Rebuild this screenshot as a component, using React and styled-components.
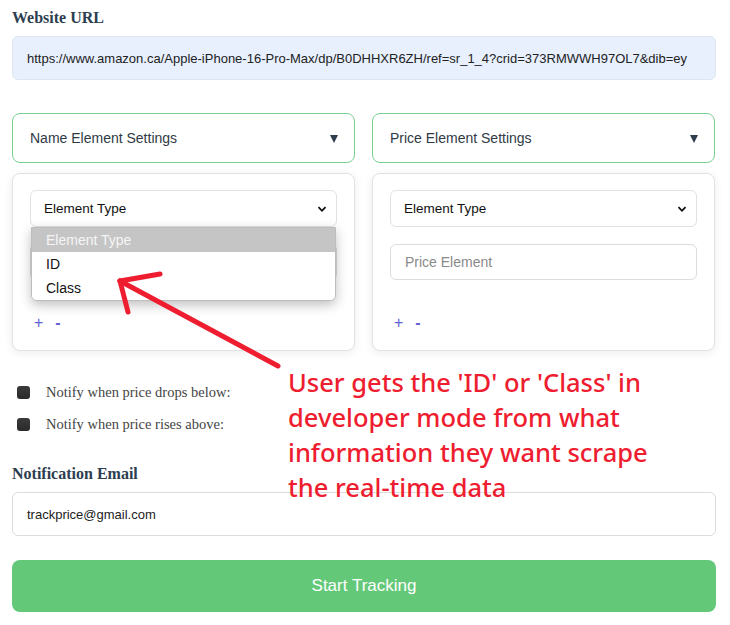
import React from "react";
import styled, { createGlobalStyle } from "styled-components";

const Global = createGlobalStyle`
  html, body { margin: 0; padding: 0; background: #ffffff; }
  body { font-family: "Liberation Sans", Arial, sans-serif; }
  * { box-sizing: border-box; }
`;

const Page = styled.div`
  position: relative;
  width: 730px;
  height: 625px;
  padding: 8px 14px 0 12px;
  overflow: hidden;
`;

const Label = styled.div`
  font-family: "Liberation Serif", "Times New Roman", serif;
  font-weight: bold;
  font-size: 16px;
  line-height: 20px;
  color: #2c3e50;
  margin-bottom: 8px;
`;

const TextInput = styled.input`
  display: block;
  width: 100%;
  height: ${(p) => p.$h || 44}px;
  padding: 0 14px;
  font-family: "Liberation Sans", Arial, sans-serif;
  font-size: ${(p) => p.$fs || 13}px;
  color: #222;
  background: ${(p) => (p.$filled ? "#e8f0fe" : "#ffffff")};
  border: 1px solid ${(p) => (p.$filled ? "#dfe5ee" : "#dcdcdc")};
  border-radius: 6px;
  outline: none;
  &::placeholder { color: #8a8a8a; }
`;

const Columns = styled.div`
  display: grid;
  grid-template-columns: 343px 343px;
  column-gap: 17px;
  margin-top: 33px;
`;

const Column = styled.div`
  display: flex;
  flex-direction: column;
  gap: 10px;
`;

const Header = styled.div`
  height: 50px;
  display: flex;
  align-items: center;
  justify-content: space-between;
  padding: 0 16px 0 17px;
  border: 1.5px solid #7ccf8f;
  border-radius: 8px;
  font-size: 14px;
  color: #2f3a45;
  background: #fff;
`;

const Triangle = styled.span`
  width: 0;
  height: 0;
  border-left: 4.5px solid transparent;
  border-right: 4.5px solid transparent;
  border-top: 8px solid #2c3e50;
  margin-top: 2px;
`;

const Panel = styled.div`
  position: relative;
  height: 178px;
  padding: 16px 17px 0 17px;
  border: 1px solid #e2e2e2;
  border-radius: 8px;
  background: #fff;
  box-shadow: 0 2px 10px rgba(0, 0, 0, 0.08);
  display: flex;
  flex-direction: column;
`;

const SelectBox = styled.div`
  position: relative;
  height: 37px;
  display: flex;
  align-items: center;
  justify-content: space-between;
  padding: 0 8px 0 13px;
  border: 1px solid #e2e2e2;
  border-radius: 6px;
  font-size: 13.5px;
  color: #111;
  background: #fff;
`;

const FieldGap = styled.div`
  height: 17px;
`;

const Controls = styled.div`
  display: flex;
  gap: 12px;
  margin-top: 34px;
  padding-left: 4px;
  font-size: 16px;
  line-height: 18px;
  color: #6464d8;
`;

const Ctl = styled.span`
  font-weight: ${(p) => (p.$minus ? "bold" : "normal")};
`;

const Dropdown = styled.div`
  position: absolute;
  left: 0;
  right: 0;
  top: 36px;
  background: #fff;
  border: 1px solid #bdbdbd;
  border-radius: 0 0 6px 6px;
  box-shadow: 0 4px 12px rgba(0, 0, 0, 0.25);
  overflow: hidden;
  z-index: 2;
`;

const Option = styled.div`
  height: 24px;
  line-height: 24px;
  padding-left: 14px;
  font-size: 14px;
  color: ${(p) => (p.$active ? "#f5f5f5" : "#111")};
  background: ${(p) => (p.$active ? "#c5c5c5" : "#fff")};
`;

const Checks = styled.div`
  display: flex;
  flex-direction: column;
  gap: 13px;
  margin-top: 32px;
  padding-left: 5px;
`;

const CheckRow = styled.label`
  display: flex;
  align-items: center;
  gap: 16px;
  font-family: "Liberation Serif", "Times New Roman", serif;
  font-size: 14.5px;
  line-height: 19px;
  color: #444;
`;

const Box = styled.span`
  width: 13px;
  height: 13px;
  border-radius: 3px;
  background: linear-gradient(#3a3a3a, #2a2a2a);
  flex: none;
`;

const EmailLabel = styled(Label)`
  margin-top: 30px;
`;

const Button = styled.button`
  display: block;
  width: 100%;
  height: 52px;
  margin-top: 24px;
  border: none;
  border-radius: 8px;
  background: #64c879;
  color: #fff;
  font-family: "Liberation Sans", Arial, sans-serif;
  font-size: 17px;
`;

const Note = styled.div`
  position: absolute;
  left: 288px;
  top: 365px;
  width: 380px;
  font-family: "Noto Sans", "Open Sans", sans-serif;
  font-weight: 500;
  font-size: 25.5px;
  line-height: 35px;
  color: #ee1d2f;
  z-index: 3;
`;

const Arrow = styled.svg`
  position: absolute;
  left: 0;
  top: 0;
  z-index: 3;
  pointer-events: none;
`;

const Chevron = () => (
  <svg width="12" height="12" viewBox="0 0 12 12">
    <path d="M2.5 4.2 L6 7.8 L9.5 4.2" fill="none" stroke="#111" strokeWidth="1.8" />
  </svg>
);

const Select = ({ open }) => (
  <SelectBox>
    <span>Element Type</span>
    <Chevron />
    {open && (
      <Dropdown>
        <Option $active>Element Type</Option>
        <Option>ID</Option>
        <Option>Class</Option>
      </Dropdown>
    )}
  </SelectBox>
);

const Settings = ({ title, placeholder, open }) => (
  <Column>
    <Header>
      <span>{title}</span>
      <Triangle />
    </Header>
    <Panel>
      <Select open={open} />
      <FieldGap />
      <TextInput $h={36} $fs={14} placeholder={placeholder} readOnly />
      <Controls>
        <Ctl>+</Ctl>
        <Ctl $minus>-</Ctl>
      </Controls>
    </Panel>
  </Column>
);

export default function App() {
  return (
    <Page>
      <Global />
      <Label>Website URL</Label>
      <TextInput
        $filled
        readOnly
        value="https://www.amazon.ca/Apple-iPhone-16-Pro-Max/dp/B0DHHXR6ZH/ref=sr_1_4?crid=373RMWWH97OL7&dib=ey"
      />
      <Columns>
        <Settings title="Name Element Settings" placeholder="Name Element" open />
        <Settings title="Price Element Settings" placeholder="Price Element" />
      </Columns>
      <Checks>
        <CheckRow>
          <Box />
          Notify when price drops below:
        </CheckRow>
        <CheckRow>
          <Box />
          Notify when price rises above:
        </CheckRow>
      </Checks>
      <EmailLabel>Notification Email</EmailLabel>
      <TextInput readOnly value="trackprice@gmail.com" />
      <Button>Start Tracking</Button>
      <Note>
        User gets the 'ID' or 'Class' in developer mode from what information they want scrape the real-time data
      </Note>
      <Arrow width="730" height="625" viewBox="0 0 730 625">
        <g stroke="#ee1d2f" strokeWidth="5" strokeLinecap="round" fill="none">
          <line x1="120" y1="281" x2="278" y2="366" />
          <line x1="120" y1="281" x2="160" y2="274" />
          <line x1="120" y1="281" x2="128" y2="312" />
        </g>
      </Arrow>
    </Page>
  );
}
